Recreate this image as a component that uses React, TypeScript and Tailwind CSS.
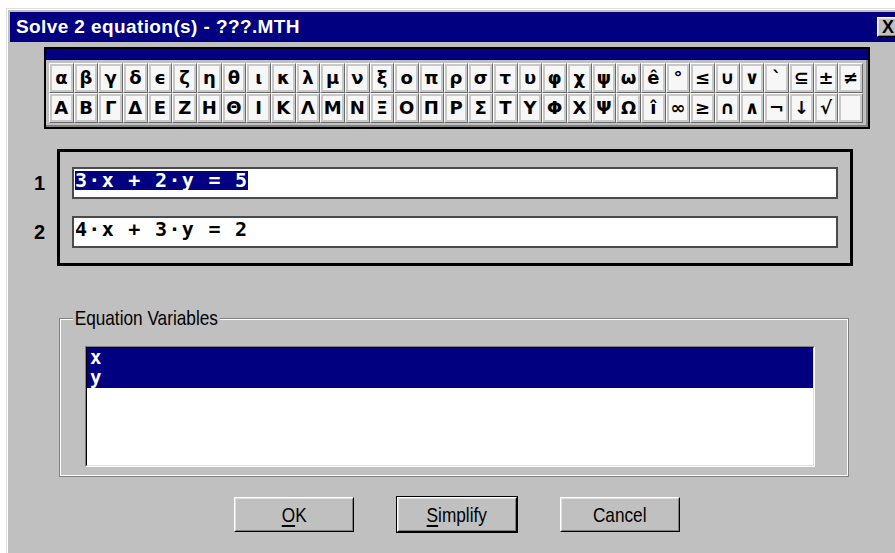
const greekLower = ['α','β','γ','δ','ϵ','ζ','η','θ','ι','κ','λ','μ','ν','ξ','ο','π','ρ','σ','τ','υ','φ','χ','ψ','ω','ê','°','≤','∪','∨','`','⊆','±','≠'];
const greekUpper = ['Α','Β','Γ','Δ','Ε','Ζ','Η','Θ','Ι','Κ','Λ','Μ','Ν','Ξ','Ο','Π','Ρ','Σ','Τ','Υ','Φ','Χ','Ψ','Ω','î','∞','≥','∩','∧','¬','↓','√',''];

const equations = ['3·x + 2·y = 5', '4·x + 3·y = 2'];
const variables = ['x', 'y'];

function SymbolKey({ ch }: { ch: string }) {
  return (
    <button className="flex h-[30px] min-w-0 items-stretch border border-t-white border-l-white border-r-[#6b6b6b] border-b-[#6b6b6b] bg-[#c8c8c8] p-[2px]">
      <span className="flex flex-1 items-center justify-center bg-[#f7f7f7] font-['DejaVu_Sans',sans-serif] text-[18px] font-bold leading-none text-black">
        {ch}
      </span>
    </button>
  );
}

function DialogButton({ label, hotkey, isDefault }: { label: string; hotkey?: string; isDefault?: boolean }) {
  const rest = hotkey ? label.slice(1) : label;
  return (
    <div className={isDefault ? 'border border-black' : 'border border-transparent'}>
      <button className="flex h-[35px] w-[120px] border border-t-white border-l-white border-r-black border-b-black bg-[#c0c0c0]">
        <span className="flex flex-1 items-center justify-center border border-t-[#dfdfdf] border-l-[#dfdfdf] border-r-[#808080] border-b-[#808080] text-[21px] text-black">
          <span className="inline-block scale-x-[0.82]">
            {hotkey && <span className="underline underline-offset-[3px]">{hotkey}</span>}
            {rest}
          </span>
        </span>
      </button>
    </div>
  );
}

export default function App() {
  return (
    <div className="h-[553px] w-[895px] overflow-hidden bg-white pl-[6px] pt-[8px] font-['Liberation_Sans',Arial,sans-serif]">
      {/* window frame */}
      <div className="h-[560px] w-[900px] border-l border-t border-[#dfdfdf] bg-[#c0c0c0]">
        <div className="h-full border-l border-t border-white pl-[2px] pr-[2px] pt-[2px]">
          {/* caption */}
          <div className="flex h-[30px] items-center bg-[#000080] pl-[6px]">
            <span className="flex-1 text-[19px] font-bold tracking-[0.4px] text-white">
              Solve 2 equation(s) - ???.MTH
            </span>
            <button className="mr-[5px] flex h-[20px] w-[22px] border border-t-white border-l-white border-r-black border-b-black bg-[#c0c0c0]">
              <span className="flex flex-1 items-center justify-center border border-t-[#dfdfdf] border-l-[#dfdfdf] border-r-[#808080] border-b-[#808080] text-[18px] font-bold leading-none text-black">
                X
              </span>
            </button>
          </div>

          {/* symbol palette */}
          <div className="ml-[34px] mt-[5px] w-[826px] border-2 border-black">
            <div className="h-[10px] bg-[#000080]" />
            <div className="border-t border-black">
              <div className="border-b-2 border-r-2 border-[#808080] pb-[2px] pl-[3px] pr-[3px] pt-[3px]">
                <div className="grid grid-cols-[repeat(33,minmax(0,1fr))]">
                  {greekLower.map((ch, i) => (
                    <SymbolKey key={'l' + i} ch={ch} />
                  ))}
                  {greekUpper.map((ch, i) => (
                    <SymbolKey key={'u' + i} ch={ch} />
                  ))}
                </div>
              </div>
            </div>
          </div>

          {/* equation editor */}
          <div className="mt-[20px] flex">
            <div className="flex w-[47px] flex-col gap-[17px] pt-[18px]">
              {equations.map((_, i) => (
                <div key={i} className="flex h-[32px] items-center justify-end pr-[12px] text-[20px] font-bold text-black">
                  {i + 1}
                </div>
              ))}
            </div>
            <div className="flex w-[796px] flex-col gap-[17px] border-[3px] border-black px-[12px] py-[15px]">
              {equations.map((eq, i) => (
                <div key={i} className="h-[32px] border-2 border-[#4a4a4a] bg-white pl-[1px] pt-[1px]">
                  <span
                    className={
                      "inline-block font-['DejaVu_Sans_Mono',monospace] text-[20px] font-bold leading-[19px] tracking-[1.3px] " +
                      (i === 0 ? 'bg-[#000080] text-white' : 'text-black')
                    }
                  >
                    {eq}
                  </span>
                </div>
              ))}
            </div>
          </div>

          {/* variables group */}
          <div className="relative ml-[49px] mt-[52px] h-[159px] w-[790px] border border-[#808080]">
            <div className="h-full border border-white pl-[24px] pr-[32px] pt-[26px]">
              <span className="absolute left-[13px] top-[-13px] inline-block origin-left scale-x-[0.82] bg-[#c0c0c0] px-[2px] text-[21px] leading-[24px] text-black">
                Equation Variables
              </span>
              <div className="h-[121px] border border-t-[#808080] border-l-[#808080] border-r-white border-b-white">
                <div className="h-full border border-t-black border-l-black border-r-[#dfdfdf] border-b-[#dfdfdf] bg-white">
                  {variables.map((v) => (
                    <div key={v} className="h-[20px] bg-[#000080] pl-[3px] font-['DejaVu_Sans_Mono',monospace] text-[19px] font-bold leading-[18px] text-white">
                      {v}
                    </div>
                  ))}
                </div>
              </div>
            </div>
          </div>

          {/* dialog buttons */}
          <div className="mt-[19px] flex justify-center gap-[41px]">
            <DialogButton label="OK" hotkey="O" />
            <DialogButton label="Simplify" hotkey="S" isDefault />
            <DialogButton label="Cancel" />
          </div>
        </div>
      </div>
    </div>
  );
}
